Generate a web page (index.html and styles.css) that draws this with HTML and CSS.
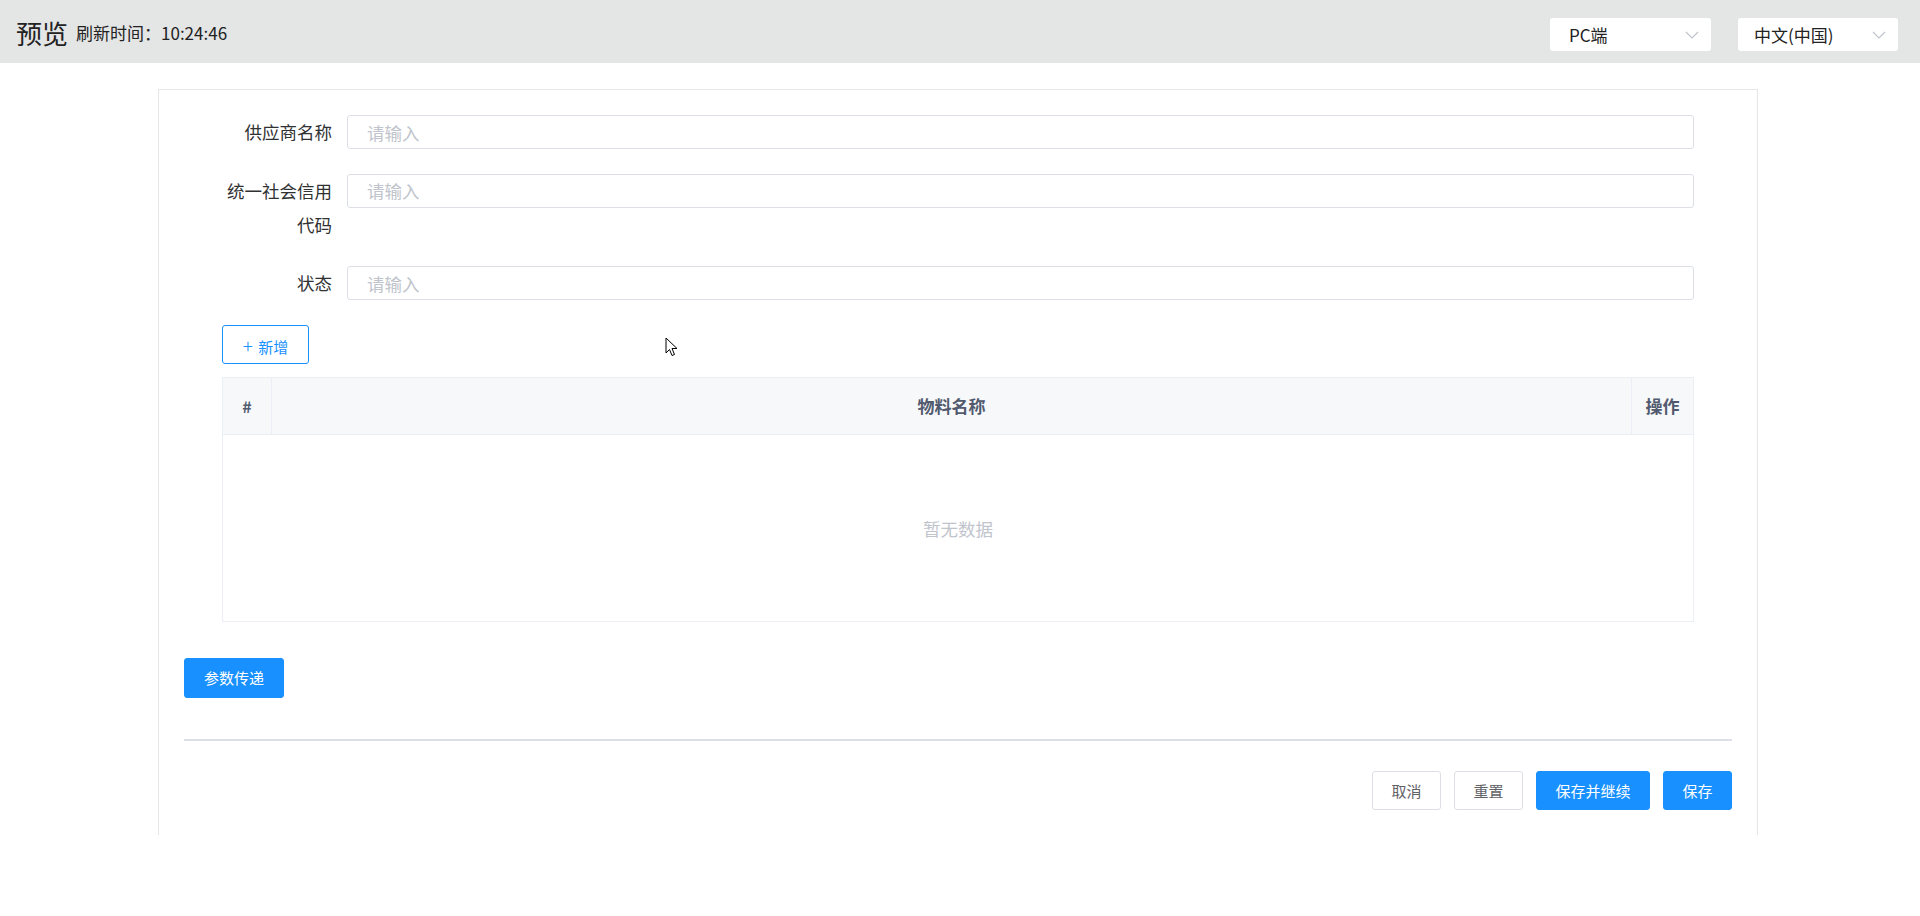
FILE: index.html
```html
<!DOCTYPE html>
<html lang="zh-CN">
<head>
    <meta charset="UTF-8">
    <title>预览</title>
    <link rel="stylesheet" href="styles.css">
</head>
<body>
<div class="topbar">
    <div class="topbar-left">
        <span class="title">预览</span>
        <span class="refresh">刷新时间：10:24:46</span>
    </div>
    <div class="topbar-right">
        <div class="select">
            <span>PC端</span>
            <svg class="chevron" width="14" height="8" viewBox="0 0 14 8"><path d="M1 1l6 6 6-6" fill="none" stroke="#c0c4cc" stroke-width="1.2"/></svg>
        </div>
        <div class="select">
            <span>中文(中国)</span>
            <svg class="chevron" width="14" height="8" viewBox="0 0 14 8"><path d="M1 1l6 6 6-6" fill="none" stroke="#c0c4cc" stroke-width="1.2"/></svg>
        </div>
    </div>
</div>

<div class="card">
    <div class="form">
        <div class="form-item">
            <label class="form-label">供应商名称</label>
            <input class="form-input" type="text" placeholder="请输入">
        </div>
        <div class="form-item">
            <label class="form-label">统一社会信用代码</label>
            <input class="form-input" type="text" placeholder="请输入">
        </div>
        <div class="form-item">
            <label class="form-label">状态</label>
            <input class="form-input" type="text" placeholder="请输入">
        </div>

        <button class="add-btn"><span class="plus">+</span> 新增</button>

        <table class="sub-table">
            <thead>
            <tr>
                <th class="col-index">#</th>
                <th>物料名称</th>
                <th class="col-action">操作</th>
            </tr>
            </thead>
            <tbody>
            <tr>
                <td colspan="3" class="empty">暂无数据</td>
            </tr>
            </tbody>
        </table>
    </div>

    <button class="btn btn-primary param-btn">参数传递</button>

    <div class="divider"></div>

    <div class="footer">
        <button class="btn btn-default">取消</button>
        <button class="btn btn-default">重置</button>
        <button class="btn btn-primary wide">保存并继续</button>
        <button class="btn btn-primary">保存</button>
    </div>
</div>

<!-- mouse pointer captured in the screenshot -->
<svg class="cursor" width="13" height="20" viewBox="0 0 13 20">
    <path d="M1 1v15l3.5-3.5 2.5 6 2.5-1-2.5-6h5z" fill="#fff" stroke="#000" stroke-width="1"/>
</svg>
</body>
</html>
```

FILE: styles.css
```css
* {
    box-sizing: border-box;
}
body {
    margin: 0;
    font-family: "Noto Sans CJK SC", "Noto Sans", sans-serif;
    color: #303133;
    background-color: #fff;
}

/* Top bar */
.topbar {
    height: 63px;
    background-color: #e4e5e5;
    display: flex;
    justify-content: space-between;
    align-items: center;
    padding: 0 22px 0 16px;
}
.topbar-left {
    display: flex;
    align-items: center;
    margin-top: 3px;
}
.title {
    font-size: 26px;
    line-height: 30px;
    color: #222;
}
.refresh {
    margin-left: 8px;
    font-size: 17px;
    line-height: 24px;
    color: #222;
}
.topbar-right {
    display: flex;
    gap: 27px;
    margin-top: 6px;
}
.select {
    width: 161px;
    height: 33px;
    background-color: #fff;
    border-radius: 3px;
    padding: 0 12px 0 19px;
    display: flex;
    justify-content: space-between;
    align-items: center;
    font-size: 17px;
    color: #222;
}
.select:last-child {
    width: 160px;
    padding-left: 16px;
}

/* Form card */
.card {
    width: 1600px;
    margin: 26px 0 0 158px;
    min-height: 746px;
    border: 1px solid #e6e6e6;
    border-bottom: none;
    padding: 25px 25px 25px 25px;
}
.form {
    padding: 0 38px;
}
.form-item {
    display: flex;
    align-items: flex-start;
    margin-bottom: 24.5px;
}
.form-label {
    width: 125px;
    flex-shrink: 0;
    padding-right: 15px;
    text-align: right;
    font-size: 17.5px;
    line-height: 34px;
    color: #303133;
}
.form-input {
    flex: 1;
    height: 34px;
    border: 1px solid #dcdfe6;
    border-radius: 3px;
    padding: 0 19px;
    font-family: inherit;
    font-size: 17.5px;
    color: #303133;
    outline: none;
}
.form-input::placeholder {
    color: #c0c4cc;
}

.add-btn {
    display: block;
    width: 87px;
    height: 39px;
    margin-top: 0.5px;
    border: 1px solid #1890ff;
    border-radius: 3px;
    background-color: #fff;
    color: #1890ff;
    font-family: inherit;
    font-size: 15px;
    padding: 0;
}
.add-btn .plus {
    font-size: 19px;
    font-weight: 300;
    margin-right: 2px;
}

/* Sub table */
.sub-table {
    width: 100%;
    margin-top: 13px;
    border-collapse: collapse;
    border: 1px solid #ebeef5;
}
.sub-table th {
    height: 57px;
    background-color: #f7f8fa;
    border: 1px solid #ebeef5;
    font-size: 17px;
    font-weight: bold;
    color: #515a6e;
    text-align: center;
    padding: 0;
}
.sub-table .col-index {
    width: 49px;
    font-size: 16px;
}
.sub-table .col-action {
    width: 62px;
}
.sub-table td.empty {
    height: 187px;
    padding-top: 2px;
    text-align: center;
    font-size: 17.5px;
    color: #c0c4cc;
}

/* Buttons */
.btn {
    height: 39px;
    width: 69px;
    border-radius: 3px;
    font-family: inherit;
    font-size: 15px;
    padding: 0;
    cursor: pointer;
}
.btn-primary {
    background-color: #1890ff;
    border: 1px solid #1890ff;
    color: #fff;
}
.btn-default {
    background-color: #fff;
    border: 1px solid #dcdfe6;
    color: #606266;
}
.btn.wide {
    width: 114px;
}
.param-btn {
    display: block;
    width: 100px;
    height: 40px;
    margin-top: 36px;
}
.divider {
    height: 2px;
    background-color: #dcdfe6;
    margin-top: 41px;
}
.footer {
    display: flex;
    justify-content: flex-end;
    gap: 13px;
    margin-top: 30px;
}

.cursor {
    position: absolute;
    left: 665px;
    top: 337px;
}
```
